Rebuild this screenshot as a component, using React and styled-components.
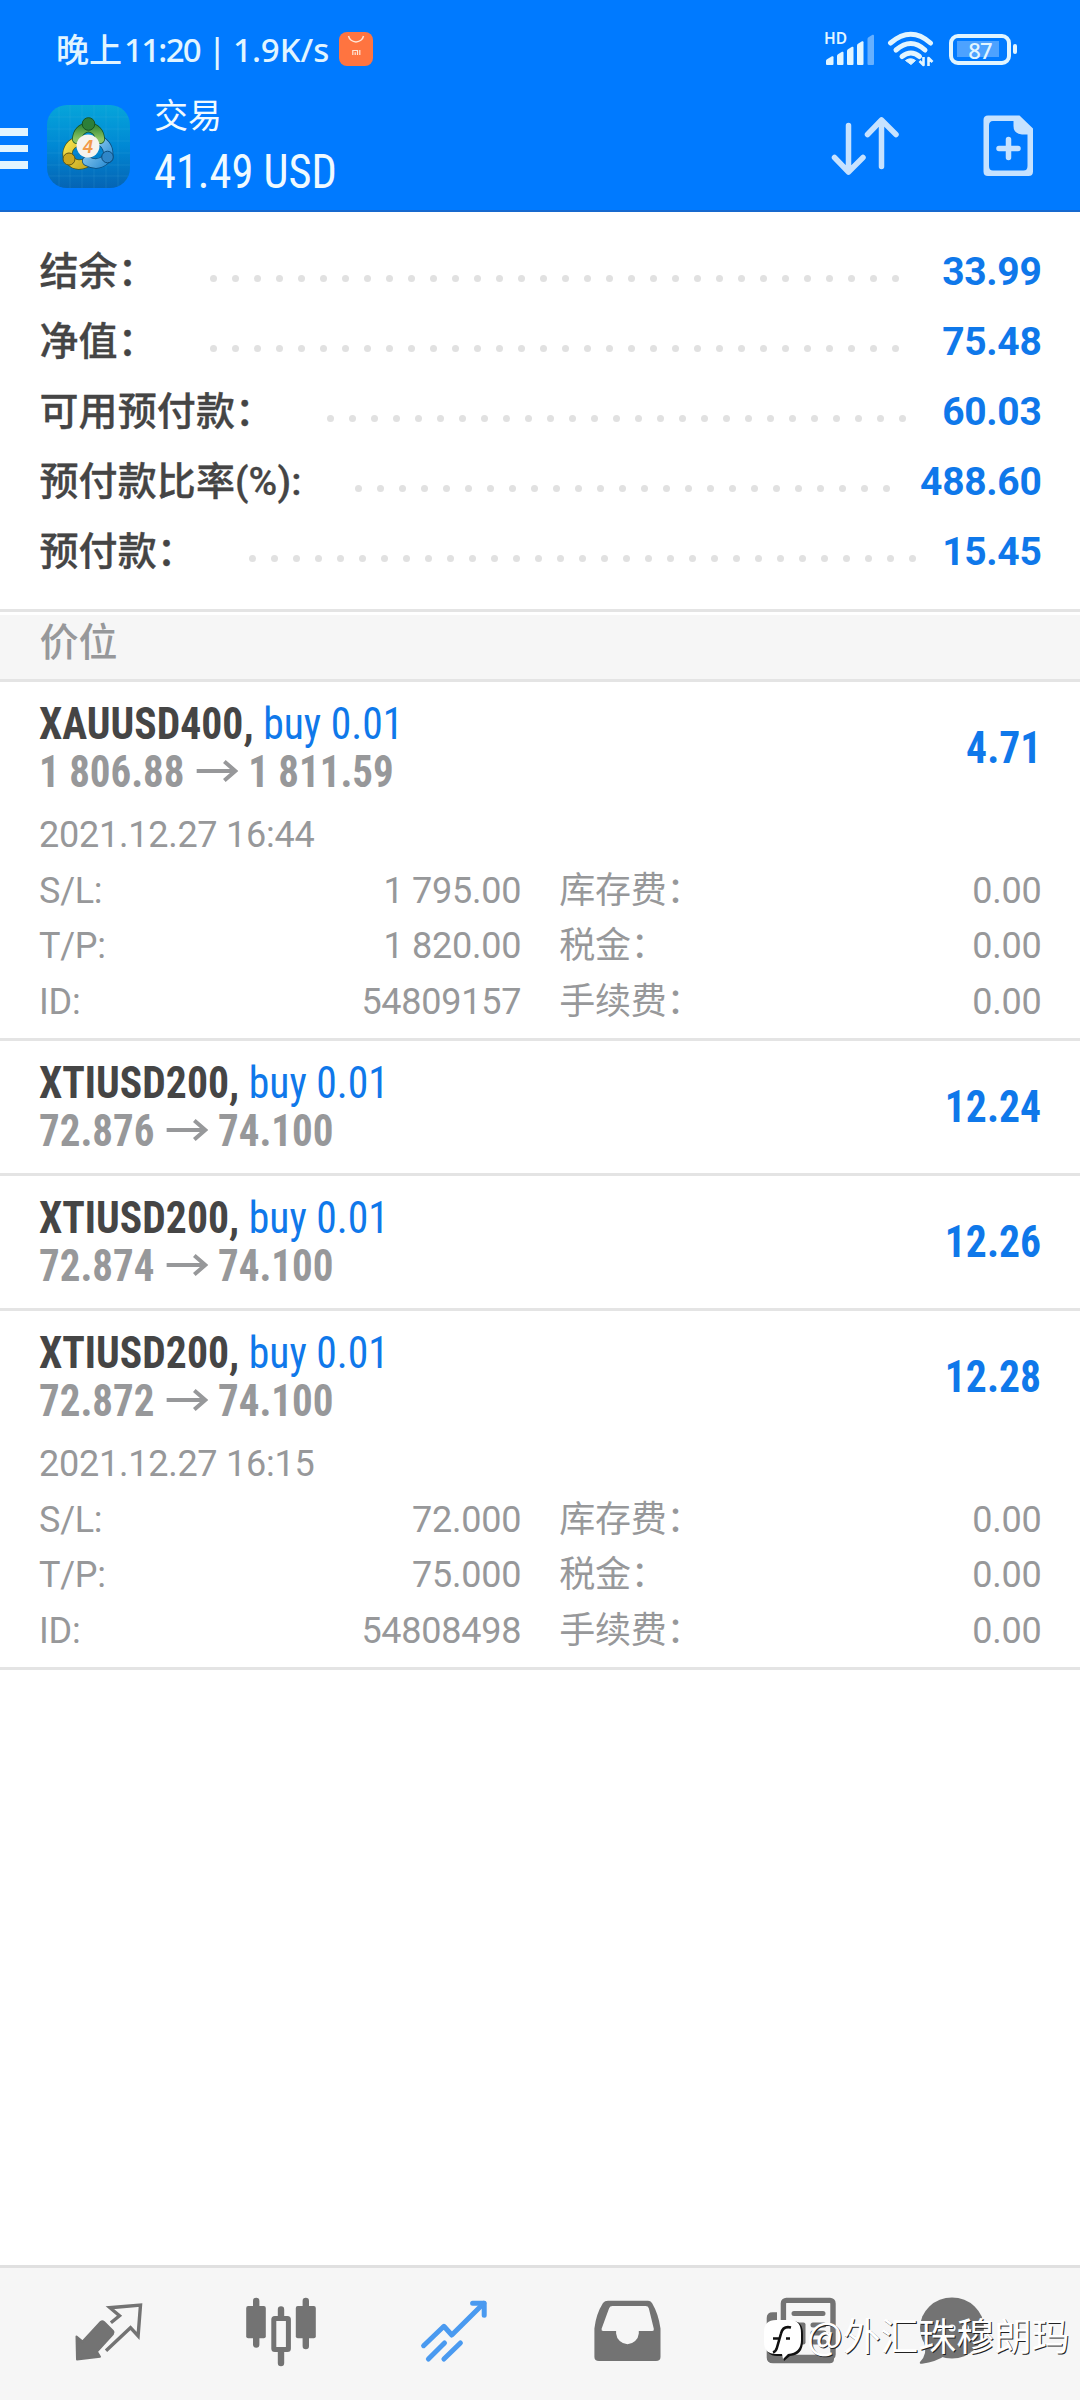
import React from "react";
import styled, { createGlobalStyle, css } from "styled-components";

const blue = "#007aff";
const lineColor = "#e4e4e4";
const gray = "#97989a";
const iconGray = "#737373";

const summary = [
  { label: "结余：", value: "33.99" },
  { label: "净值：", value: "75.48" },
  { label: "可用预付款：", value: "60.03" },
  { label: "预付款比率(%):", value: "488.60" },
  { label: "预付款：", value: "15.45" },
];

const positions = [
  {
    symbol: "XAUUSD400",
    open: "1 806.88",
    current: "1 811.59",
    profit: "4.71",
    date: "2021.12.27 16:44",
    details: [
      ["S/L:", "1 795.00", "库存费：", "0.00"],
      ["T/P:", "1 820.00", "税金：", "0.00"],
      ["ID:", "54809157", "手续费：", "0.00"],
    ],
  },
  { symbol: "XTIUSD200", open: "72.876", current: "74.100", profit: "12.24" },
  { symbol: "XTIUSD200", open: "72.874", current: "74.100", profit: "12.26" },
  {
    symbol: "XTIUSD200",
    open: "72.872",
    current: "74.100",
    profit: "12.28",
    date: "2021.12.27 16:15",
    details: [
      ["S/L:", "72.000", "库存费：", "0.00"],
      ["T/P:", "75.000", "税金：", "0.00"],
      ["ID:", "54808498", "手续费：", "0.00"],
    ],
  },
];

const SignalIcon = () => (
  <svg width="52" height="36" viewBox="0 0 52 36" fill="#e2f5ff">
    <path d="M2 33v-3q0-1 1-1.700l5-3q1.500-.5 1.500 1V33q0 1-1 1H3q-1 0-1-1z" />
    <path d="M13 33v-8q0-1 1-1.700l4-2.500q1.500-.5 1.500 1V33q0 1-1 1H14q-1 0-1-1z" />
    <path d="M23 33V20q0-1 1-1.700l4-2.500q1.500-.5 1.500 1V33q0 1-1 1H24q-1 0-1-1z" />
    <path d="M33 33V14.500q0-1 1-1.700l4-2.500q1.500-.5 1.500 1V33q0 1-1 1H34q-1 0-1-1z" />
    <path
      d="M43.500 33V8q0-1 1-1.700l4-2.500q1.500-.5 1.500 1V33q0 1-1 1h-4.500q-1 0-1-1z"
      fill="#66b0ff"
    />
  </svg>
);

const WifiIcon = () => (
  <svg width="48" height="36" viewBox="0 0 48 36" fill="none">
    <g stroke="#e2f5ff" strokeWidth="5" strokeLinecap="round">
      <path d="M3.500 12Q24-5.500 43.500 12" />
      <path d="M9 19Q24 6 38 19" />
      <path d="M15 25.500Q24 18.500 32.500 25.500" />
    </g>
    <path d="M18.500 29.500q5-3.500 10 0L24 33.500z" fill="#e2f5ff" stroke="#e2f5ff" />
    <path
      d="M36.500 26v8l-4-4M41.500 35v-8l4 4"
      stroke="#e2f5ff"
      strokeWidth="2.600"
      strokeLinejoin="round"
    />
  </svg>
);

const BagIcon = () => (
  <svg width="34" height="34" viewBox="0 0 34 34" fill="none">
    <rect width="34" height="34" rx="8" fill="#ff7440" />
    <path d="M9.500 4a7.700 7.700 0 0 0 15 0" stroke="#ffe6d8" strokeWidth="1.500" />
    <path
      d="M13.800 23v-4.500h4.700V23M16.200 20.300V23M20.800 18v5"
      stroke="#ffe6d8"
      strokeWidth="1.200"
    />
  </svg>
);

const AppLogo = () => (
  <Logo viewBox="0 0 83 83">
    <defs>
      <linearGradient id="sky" x1="0" y1="0" x2="0" y2="1">
        <stop offset="0" stopColor="#06a5da" />
        <stop offset="0.500" stopColor="#0088d4" />
        <stop offset="1" stopColor="#0564b4" />
      </linearGradient>
      <linearGradient id="leaf" x1="0" y1="0" x2="0" y2="1">
        <stop offset="0" stopColor="#3d8f3a" />
        <stop offset="1" stopColor="#8cc563" />
      </linearGradient>
      <linearGradient id="gold" x1="0" y1="0" x2="1" y2="1">
        <stop offset="0" stopColor="#f4e04a" />
        <stop offset="1" stopColor="#c9ac24" />
      </linearGradient>
      <linearGradient id="sea" x1="0" y1="0" x2="1" y2="1">
        <stop offset="0" stopColor="#9bd4f5" />
        <stop offset="1" stopColor="#2f8fd4" />
      </linearGradient>
    </defs>
    <rect width="83" height="83" rx="20" fill="url(#sky)" />
    <path
      d="M12 2v79M23 0v83M35 0v83M47 0v83M59 0v83M71 2v79M2 12h79M0 24h83M0 36h83M0 48h83M0 60h83M2 71h79"
      stroke="#5cc4ee"
      strokeOpacity="0.150"
      fill="none"
    />
    {/* three people in a ring */}
    <g fill="none" strokeLinecap="round">
      <path d="M29 37a13 13 0 0 0-8 16M24 56q5 6 15 2" stroke="#4d5a1a" strokeWidth="10" />
      <path d="M29 37a13 13 0 0 0-8 16M24 56q5 6 15 2" stroke="url(#gold)" strokeWidth="8.500" />
      <path d="M54 36q9 6 7 17M59 54q-8 8-19 2" stroke="#0c4c7c" strokeWidth="10" />
      <path d="M54 36q9 6 7 17M59 54q-8 8-19 2" stroke="url(#sea)" strokeWidth="8.500" />
      <path d="M30 34q1-10 11.500-12Q52 24 53 34" stroke="#175322" strokeWidth="10" />
      <path d="M30 34q1-10 11.500-12Q52 24 53 34" stroke="url(#leaf)" strokeWidth="8.500" />
    </g>
    <circle cx="41.500" cy="19" r="6.300" fill="#2c7f38" stroke="#175322" />
    <circle cx="22" cy="54" r="6" fill="#cba71f" stroke="#5f5614" />
    <circle cx="60.500" cy="52" r="5.800" fill="#2f86c8" stroke="#0c4c7c" />
    <circle cx="41" cy="41" r="11.500" fill="#f6f3ee" />
    <text
      x="41"
      y="47.500"
      textAnchor="middle"
      fontFamily="Liberation Sans, sans-serif"
      fontSize="18"
      fontStyle="italic"
      fontWeight="700"
      fill="#f29a4a"
    >
      4
    </text>
  </Logo>
);

const SortIcon = () => (
  <svg width="70" height="60" viewBox="0 0 70 60" fill="none">
    <path
      d="M18.500 9.500V56M4.500 41.500l14 14.500L33 41.500M51.500 50.500V4M37.500 18.500L51.500 4L66 18.500"
      stroke="#c6e2ff"
      strokeWidth="5.500"
      strokeLinecap="round"
      strokeLinejoin="round"
    />
  </svg>
);

const NewOrderIcon = () => (
  <svg width="50" height="62" viewBox="0 0 50 62" fill="none">
    <path
      fillRule="evenodd"
      fill="#c6e2ff"
      d="M5 0.500h31.500L50 13.500v43q0 4.500-4.500 4.500H5Q0.500 61 0.500 56.500V5Q0.500 .5 5 .5zM10 6Q6 6 6 10.500v40.500q0 4.500 4 4.500h30.500q4 0 4-4.500V19.500h-5.500q-8.500-1-8.500-8.500V6z"
    />
    <path
      d="M25.500 24.500v18M16 33.500h19"
      stroke="#c6e2ff"
      strokeWidth="5.500"
      strokeLinecap="round"
    />
  </svg>
);

const ArrowIcon = () => (
  <svg width="46" height="26" viewBox="0 0 42 26" preserveAspectRatio="none" fill="none">
    <path d="M0 12h38M28 2.500l11 9.500L28 21.500" stroke={gray} strokeWidth="4" />
  </svg>
);

const QuotesIcon = () => (
  <TabSvg viewBox="0 0 80 80">
    <path
      d="M8.500 44.500l6.100 5 18-19.500q1.700-1.500 3.400 0l9 9q1.300 1.500 0 3L29 59.700l3 5L9 67.500z"
      fill={iconGray}
      stroke={iconGray}
      strokeWidth="2"
      strokeLinejoin="round"
    />
    <path
      d="M42.900 30.700l8.600-7-9.600-8 30.600-2.700-2.400 31-7.600-8.300L38 58.700"
      fill="none"
      stroke={iconGray}
      strokeWidth="3.400"
    />
  </TabSvg>
);

const ChartIcon = () => (
  <TabSvg viewBox="0 0 80 80">
    <path
      d="M15.200 9v43.500M40 17.500V28M40 58v13M64.800 9v45"
      stroke={iconGray}
      strokeWidth="6.400"
      strokeLinecap="round"
    />
    <rect x="5.200" y="14" width="19.600" height="32.300" rx="2" fill={iconGray} />
    <rect x="54.800" y="14" width="20" height="32.300" rx="2" fill={iconGray} />
    <rect
      x="32.800"
      y="26.500"
      width="14.600"
      height="31"
      rx="1"
      fill="#f6f6f6"
      stroke={iconGray}
      strokeWidth="5"
    />
  </TabSvg>
);

const TradeIcon = () => (
  <TabSvg viewBox="0 0 80 80">
    <g fill="none" stroke="#4a9af0" strokeWidth="5" strokeLinejoin="round">
      <path d="M9.600 53.700l20.300-19.400 7.900 8.700L69.800 11.300" strokeLinecap="round" />
      <path d="M58.600 11.300h11.600v12" strokeLinecap="round" />
      <path d="M14.400 67L30.500 51M29.900 67L46.400 51" strokeLinecap="round" />
    </g>
  </TabSvg>
);

const InboxIcon = () => (
  <TabSvg viewBox="1 0 80 80">
    <path
      fillRule="evenodd"
      fill={iconGray}
      d="M21 8.700h40q2.500 0 4 2.300 6.500 11 8.500 25.500v28.500q0 4-4.500 4H12q-4.600 0-4.600-4V36.500Q9 22 16 11q1.700-2.300 5-2.300zM25.500 14q-2.600 0-3.400 2.300l-7.500 20.500q-.5 2.200 1.500 2.200h13v2.500a11.400 11.800 0 0 0 22.700 0V39h13.500q2 0 1.500-2.200l-5-20.500Q61.200 14 58.500 14z"
    />
  </TabSvg>
);

const NewsIcon = () => (
  <TabSvg viewBox="0 0 80 80">
    <path
      d="M5.700 26q0-5.700 6-5.700H16V60q0 3.500 4 3.500h53V67q0 4.300-4.300 4.300H12q-6.300 0-6.300-5.800z"
      fill={iconGray}
    />
    <rect
      x="22.400"
      y="8.400"
      width="49.600"
      height="57"
      rx="3"
      fill="#f6f6f6"
      stroke={iconGray}
      strokeWidth="5.400"
    />
    <path
      d="M33 21.500h29M52 33h11M52 41h11M52 50h11"
      stroke={iconGray}
      strokeWidth="5"
      strokeLinecap="round"
    />
    <rect x="30.500" y="30.500" width="14" height="22" rx="2" fill={iconGray} />
  </TabSvg>
);

const ChatIcon = () => (
  <TabSvg viewBox="0 0 80 80">
    <ellipse cx="40" cy="36" rx="32" ry="30.500" fill={iconGray} />
    <path d="M12 50q4 12-4 20-1 2 2 1.700Q24 70 34 63z" fill={iconGray} />
    <g fill="#f6f6f6">
      <circle cx="26.500" cy="36" r="3.600" />
      <circle cx="40" cy="36" r="3.600" />
      <circle cx="53.500" cy="36" r="3.600" />
    </g>
  </TabSvg>
);

const WatermarkLogo = () => (
  <svg width="42" height="46" viewBox="0 0 42 46">
    <path
      d="M14 4h14q11 0 11 13v7q0 14-13 15l-6 5-1-5h-6Q2 39 2 27V16Q2 4 14 4z"
      fill="#111"
    />
    <path
      d="M12 3h14q11 0 11 13v7q0 13-13 14l-5 5-1-5h-6Q0 37 0 25V15Q0 3 12 3z"
      fill="#fff"
    />
    <path
      d="M27 10.500q-8-2-10 6l-4 14q-1 4-4 5M9 21.500h7M22 21.500h4"
      fill="none"
      stroke="#111"
      strokeWidth="2.600"
    />
  </svg>
);

const tabs = [QuotesIcon, ChartIcon, TradeIcon, InboxIcon, NewsIcon, ChatIcon];

const App = () => {
  return (
    <>
      <GlobalStyle />
      <Screen>
        <Header>
          <StatusBar>
            <StatusText>
              晚上<StatusTime>11:20</StatusTime>
              <StatusDivider>|</StatusDivider>
              <StatusSpeed>1.9K/s</StatusSpeed>
            </StatusText>
            <BagIcon />
            <StatusIcons>
              <Signal>
                <SignalIcon />
                <SignalLabel>HD</SignalLabel>
              </Signal>
              <WifiIcon />
              <Battery>
                <BatteryBody>87</BatteryBody>
                <BatteryTip />
              </Battery>
            </StatusIcons>
          </StatusBar>
          <TitleBar>
            <MenuButton>
              <MenuLine />
              <MenuLine />
              <MenuLine />
            </MenuButton>
            <AppLogo />
            <TitleBlock>
              <Title>交易</Title>
              <Total>41.49 USD</Total>
            </TitleBlock>
            <Actions>
              <SortIcon />
              <NewOrderIcon />
            </Actions>
          </TitleBar>
        </Header>

        <Summary>
          {summary.map((row) => (
            <SummaryRow key={row.label}>
              <SummaryLabel>{row.label}</SummaryLabel>
              <Leader>
                {Array.from({ length: 40 }, (_, i) => (
                  <Dot key={i} />
                ))}
              </Leader>
              <SummaryValue>{row.value}</SummaryValue>
            </SummaryRow>
          ))}
        </Summary>

        <SectionTitle>价位</SectionTitle>

        {positions.map((p) => (
          <Position key={p.open}>
            <PositionHead>
              <div>
                <SymbolLine>
                  {p.symbol}, <Side>buy 0.01</Side>
                </SymbolLine>
                <PriceLine>
                  {p.open}
                  <ArrowIcon />
                  {p.current}
                </PriceLine>
              </div>
              <Profit>{p.profit}</Profit>
            </PositionHead>
            {p.details && (
              <Details>
                <DetailDate>{p.date}</DetailDate>
                {p.details.map(([name, value, feeName, fee]) => (
                  <DetailRow key={name}>
                    <DetailCell>
                      <span>{name}</span>
                      <span>{value}</span>
                    </DetailCell>
                    <DetailCell>
                      <span>{feeName}</span>
                      <span>{fee}</span>
                    </DetailCell>
                  </DetailRow>
                ))}
              </Details>
            )}
          </Position>
        ))}

        <TabBar>
          {tabs.map((Icon, i) => (
            <Tab key={i}>
              <Icon />
            </Tab>
          ))}
        </TabBar>

        <Watermark>
          <WatermarkLogo />
          <WatermarkText>@外汇珠穆朗玛</WatermarkText>
        </Watermark>
      </Screen>
    </>
  );
};

const GlobalStyle = createGlobalStyle`
  body {
    margin: 0;
    background: #fff;
  }

  svg {
    display: block;
    flex-shrink: 0;
  }
`;

// a little narrower than the condensed face itself
const condensed = css`
  font-family: "Roboto Condensed", Roboto, "Noto Sans CJK SC", sans-serif;
  font-stretch: 75%;
  transform: scaleX(0.925);
  transform-origin: left;
`;

const Screen = styled.div`
  position: relative;
  display: flex;
  flex-direction: column;
  width: 1080px;
  height: 2400px;
  overflow: hidden;
  background: #fff;
  font-family: Roboto, "Noto Sans CJK SC", sans-serif;
`;

const Header = styled.header`
  box-sizing: border-box;
  height: 212px;
  background: ${blue};
  border-bottom: 2px solid #1769cf;
`;

const StatusBar = styled.div`
  display: flex;
  align-items: center;
  height: 98px;
  box-sizing: border-box;
  padding: 0 63px 0 56px;
`;

const StatusText = styled.div`
  display: flex;
  width: 283px;
  color: #e2f5ff;
  font-family: "Noto Sans", "Noto Sans CJK SC", sans-serif;
  font-size: 33px;
  font-weight: 500;
  line-height: 99px;
  white-space: nowrap;
`;

const StatusTime = styled.span`
  width: 84px;
  padding-left: 2px;
  letter-spacing: -1.7px;
`;

const StatusDivider = styled.span`
  width: 25px;
`;

const StatusSpeed = styled.span`
  width: 100px;
`;

const StatusIcons = styled.div`
  display: flex;
  align-items: center;
  margin-left: auto;
`;

const Signal = styled.div`
  position: relative;
  margin-right: 11px;
`;

const SignalLabel = styled.span`
  position: absolute;
  left: 0;
  top: -4px;
  color: #e2f5ff;
  font-family: "Noto Sans", sans-serif;
  font-size: 15.5px;
  font-weight: 600;
  line-height: 22px;
`;

const Battery = styled.div`
  display: flex;
  align-items: center;
  margin-left: 14px;
`;

const BatteryBody = styled.div`
  box-sizing: border-box;
  width: 62px;
  height: 31px;
  border: 4px solid #e2f5ff;
  border-radius: 9px;
  background: linear-gradient(#4da2ff, #4da2ff) 4px 3.5px / 42px 16px no-repeat;
  color: #e2f5ff;
  font-family: "Noto Sans", sans-serif;
  font-size: 22px;
  font-weight: 500;
  letter-spacing: -0.8px;
  line-height: 24px;
  text-align: center;
`;

const BatteryTip = styled.span`
  width: 4px;
  height: 10px;
  margin-left: 2px;
  border-radius: 2px;
  background: #e2f5ff;
`;

const TitleBar = styled.div`
  display: flex;
  height: 112px;
`;

const MenuButton = styled.div`
  display: flex;
  flex-direction: column;
  gap: 9px;
  width: 47px;
  padding-top: 30px;
`;

const MenuLine = styled.span`
  width: 28px;
  height: 7.5px;
  background: #e2f5ff;
`;

const Logo = styled.svg`
  width: 83px;
  height: 83px;
  margin-top: 7px;
`;

const TitleBlock = styled.div`
  margin-left: 24px;
  color: #f0faff;
`;

const Title = styled.div`
  font-size: 34px;
  line-height: 37px;
`;

const Total = styled.div`
  ${condensed}
  font-size: 48px;
  line-height: 73px;
`;

const Actions = styled.div`
  display: flex;
  align-items: center;
  gap: 83px;
  height: 96px;
  margin-left: auto;
  padding-right: 47px;
`;

const Summary = styled.section`
  box-sizing: border-box;
  height: 400px;
  padding: 25px 38.5px 0 39.5px;
  border-bottom: 3px solid ${lineColor};
`;

const SummaryRow = styled.div`
  display: flex;
  align-items: center;
  height: 70px;
  font-size: 39px;
  line-height: 70px;
  white-space: nowrap;
`;

const SummaryLabel = styled.span`
  color: #454545;
  font-weight: 500;
  letter-spacing: 0.1px;
  -webkit-text-stroke: 0.3px #454545;
`;

const Leader = styled.div`
  display: flex;
  flex: 1;
  flex-wrap: wrap;
  height: 22px;
  margin: 13px 17px 0 45.5px;
  overflow: hidden;
`;

const Dot = styled.span`
  width: 7px;
  height: 7px;
  margin: 7.5px;
  border-radius: 50%;
  background: #e1e1e1;
`;

const SummaryValue = styled.span`
  color: #0f78ea;
  font-weight: 700;
  letter-spacing: -0.3px;
`;

const SectionTitle = styled.div`
  box-sizing: border-box;
  height: 70px;
  padding-left: 39.5px;
  border-top: 3px solid #fff;
  border-bottom: 3px solid ${lineColor};
  background: #f6f6f6;
  color: ${gray};
  font-size: 39px;
  font-weight: 500;
  line-height: 57px;
`;

const Position = styled.section`
  padding: 18px 38.5px 0 39px;
  border-bottom: 3px solid ${lineColor};
`;

const PositionHead = styled.div`
  display: flex;
  align-items: center;
  justify-content: space-between;
  padding-bottom: 18px;
  font-size: 45px;
  font-weight: 700;
  line-height: 48px;
  white-space: nowrap;
`;

const SymbolLine = styled.div`
  ${condensed}
  color: #454545;
`;

const Side = styled.span`
  color: #0f78ea;
  font-weight: 400;
`;

const PriceLine = styled.div`
  ${condensed}
  display: flex;
  align-items: center;
  color: ${gray};
  transform: scaleX(0.91);

  svg {
    margin: 0 11px 0 13px;
  }
`;

const Profit = styled.div`
  ${condensed}
  color: #0f78ea;
  transform-origin: right;
`;

const Details = styled.div`
  margin-top: -6px;
  padding-bottom: 8px;
  color: ${gray};
  font-size: 36px;
  letter-spacing: -0.25px;
  line-height: 55.5px;
`;

const DetailDate = styled.div``;

const DetailRow = styled.div`
  display: grid;
  grid-template-columns: 1fr 1fr;
  gap: 38px;
`;

const DetailCell = styled.div`
  display: flex;
  justify-content: space-between;
`;

const TabBar = styled.nav`
  display: flex;
  box-sizing: border-box;
  height: 135px;
  margin-top: auto;
  padding: 24px 62px 0 21px;
  border-top: 3px solid #e0e0e0;
  background: #f6f6f6;
`;

const Tab = styled.div`
  display: flex;
  justify-content: center;
  width: 173.3px;
  flex-shrink: 0;

  &:last-child {
    width: 130px;
  }
`;

const TabSvg = styled.svg`
  width: 80px;
  height: 80px;
`;

const Watermark = styled.div`
  position: absolute;
  left: 764px;
  top: 2317px;
  display: flex;
  white-space: nowrap;
`;

const WatermarkText = styled.span`
  margin-left: 1px;
  color: #fff;
  font-family: "Noto Sans CJK SC", sans-serif;
  font-size: 37.8px;
  line-height: 34px;
  text-shadow: 1px 1px 0 #222;
`;

export default App;
